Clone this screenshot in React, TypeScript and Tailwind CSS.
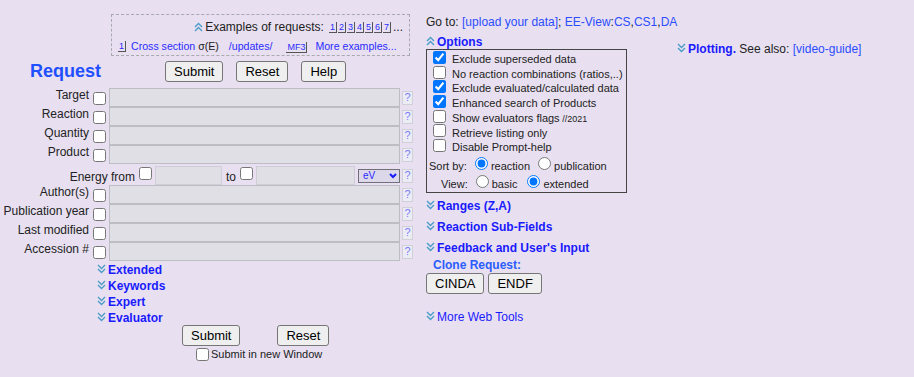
import React from "react";

const font = { fontFamily: '"Liberation Sans", Arial, sans-serif' };

const Chevrons = ({ up = false }: { up?: boolean }) => (
  <svg width="9" height="10" viewBox="0 0 9 10" className="shrink-0">
    <g
      fill="none"
      stroke="#4b9cc9"
      strokeWidth="1.4"
      transform={up ? "rotate(180 4.5 5)" : undefined}
    >
      <polyline points="1,1 4.5,4.5 8,1" />
      <polyline points="1,5 4.5,8.5 8,5" />
    </g>
  </svg>
);

const Help = () => (
  <span className="ml-[2px] flex h-[14px] w-[11px] shrink-0 items-center justify-center border border-[#d0d0d8] bg-[#ececf4] text-[11px] leading-none text-[#7a7aff]">
    ?
  </span>
);

const KeyLink = ({ children }: { children: React.ReactNode }) => (
  <span className="border-r border-b border-[#555] px-[1px] text-[9px] leading-[10px] text-[#2b2bff]">
    {children}
  </span>
);

const Btn = ({ children, className = "" }: { children: React.ReactNode; className?: string }) => (
  <button
    className={`h-[21px] rounded-[3px] border border-[#767676] bg-[#efefef] px-[8px] text-[13px] leading-none text-black ${className}`}
  >
    {children}
  </button>
);

const Box = ({ checked = false, className = "" }: { checked?: boolean; className?: string }) => (
  <input
    type="checkbox"
    defaultChecked={checked}
    className={`m-0 h-[13px] w-[13px] shrink-0 ${className}`}
  />
);

const Field = ({ label }: { label: string }) => (
  <div className="flex h-[19px] items-center">
    <span className="w-[89px] -translate-y-[3px] text-right text-[12px] whitespace-nowrap">{label}</span>
    <Box className="ml-[4px] translate-y-[1px]" />
    <span className="ml-[3px] h-[19px] w-[291px] border border-[#bdbdc4] bg-[#e0dfe6]" />
    <Help />
  </div>
);

const Section = ({ label, bold = true }: { label: string; bold?: boolean }) => (
  <div className="flex items-start gap-[2px]">
    <span className="mt-[1px]">
      <Chevrons />
    </span>
    <span className={`text-[12px] leading-[14px] text-[#1a1aff] ${bold ? "font-bold" : ""}`}>{label}</span>
  </div>
);

const Opt = ({ label, checked = false, small }: { label: string; checked?: boolean; small?: string }) => (
  <div className="flex h-[14.7px] items-center">
    <Box checked={checked} className="ml-[6px] -translate-y-[2px]" />
    <span className="ml-[6px] text-[11px]">
      {label}
      {small && <span className="text-[9px]"> {small}</span>}
    </span>
  </div>
);

export default function App() {
  return (
    <div style={font} className="flex h-[377px] w-[914px] bg-[#e8e0f0] text-[#222]">
      {/* left column */}
      <div className="flex w-[415px] flex-col pt-[14px]">
        <div className="ml-[111px] flex h-[42px] w-[299px] flex-col border border-dashed border-[#a8a8b0] px-[6px] whitespace-nowrap">
          <div className="mt-[3px] flex items-center justify-end gap-[2px] text-[12px]">
            <Chevrons up />
            <span>Examples of requests:</span>
            <span className="ml-[3px] flex gap-[1px]">
              {["1", "2", "3", "4", "5", "6", "7"].map((n) => (
                <KeyLink key={n}>{n}</KeyLink>
              ))}
            </span>
            <span>...</span>
          </div>
          <div className="mt-[3px] flex items-center text-[10.6px] text-[#2b2bff]">
            <KeyLink>1</KeyLink>
            <span className="ml-[5px]">
              Cross section <span className="text-[#222]">σ(E)</span>
            </span>
            <span className="ml-[10px]">/updates/</span>
            <span className="ml-[14px]">
              <KeyLink>MF3</KeyLink>
            </span>
            <span className="ml-[8px]">More examples...</span>
          </div>
        </div>

        <div className="mt-[4px] flex h-[22px] items-center">
          <span className="ml-[30px] w-[135px] text-[18px] font-bold text-[#1f4fff]">Request</span>
          <Btn>Submit</Btn>
          <Btn className="ml-[13px]">Reset</Btn>
          <Btn className="ml-[13px]">Help</Btn>
        </div>

        <div className="mt-[6px] flex flex-col">
          <Field label="Target" />
          <Field label="Reaction" />
          <Field label="Quantity" />
          <Field label="Product" />
          <div className="mt-[2px] flex h-[19px] items-center">
            <span className="w-[135px] translate-y-[1px] text-right text-[12px]">Energy from</span>
            <Box className="ml-[4px] -translate-y-[2px]" />
            <span className="ml-[3px] h-[19px] w-[67px] border border-[#cfcdd8] bg-[#e0dfe6]" />
            <span className="ml-[4px] translate-y-[1px] text-[12px]">to</span>
            <Box className="ml-[4px] -translate-y-[2px]" />
            <span className="ml-[3px] h-[19px] w-[99px] border border-[#cfcdd8] bg-[#e0dfe6]" />
            <span className="ml-[3px] flex h-[14px] w-[42px] items-center justify-between border border-[#707078] bg-[#dcd8ea] pr-[2px] pl-[4px] text-[10px] text-[#2b2bff]">
              eV
              <svg width="8" height="6" viewBox="0 0 8 6">
                <polyline points="1,1 4,4 7,1" fill="none" stroke="#1a1aff" strokeWidth="2" />
              </svg>
            </span>
            <Help />
          </div>
          <Field label="Author(s)" />
          <Field label="Publication year" />
          <Field label="Last modified" />
          <Field label="Accession #" />
        </div>

        <div className="mt-[2px] ml-[97px] flex flex-col gap-[2px]">
          <Section label="Extended" />
          <Section label="Keywords" />
          <Section label="Expert" />
          <Section label="Evaluator" />
        </div>

        <div className="flex items-center">
          <Btn className="ml-[182px]">Submit</Btn>
          <Btn className="ml-[37px]">Reset</Btn>
        </div>
        <div className="ml-[196px] flex items-center gap-[2px] text-[11px]">
          <Box />
          <span>Submit in new Window</span>
        </div>
      </div>

      {/* right column */}
      <div className="ml-[11px] flex flex-col pt-[13px]">
        <div className="text-[12px]">
          Go to: <span className="text-[#2b4dff]">[upload your data]</span>;{" "}
          <span className="text-[#2b4dff]">EE-View</span>:<span className="text-[#2b4dff]">CS</span>,
          <span className="text-[#2b4dff]">CS1</span>,<span className="text-[#2b4dff]">DA</span>
        </div>
        <div className="flex">
          <div className="flex w-[251px] flex-col">
            <div className="mt-[4px] flex items-start gap-[2px]">
              <span className="mt-[1px]">
                <Chevrons up />
              </span>
              <span className="text-[12px] leading-[14px] font-bold text-[#1a1aff]">Options</span>
            </div>
            <div className="flex h-[144px] w-[201px] flex-col border border-[#444] pt-[2px]">
              <Opt label="Exclude superseded data" checked />
              <Opt label="No reaction combinations (ratios,..)" />
              <Opt label="Exclude evaluated/calculated data" checked />
              <Opt label="Enhanced search of Products" checked />
              <Opt label="Show evaluators flags" small="//2021" />
              <Opt label="Retrieve listing only" />
              <Opt label="Disable Prompt-help" />
              <div className="mt-[3px] flex h-[16px] items-center text-[11px]">
                <span className="ml-[2px]">Sort by:</span>
                <input type="radio" name="s" defaultChecked className="m-0 ml-[8px] h-[13px] w-[13px] -translate-y-[2px]" />
                <span className="ml-[3px]">reaction</span>
                <input type="radio" name="s" className="m-0 ml-[8px] h-[13px] w-[13px] -translate-y-[2px]" />
                <span className="ml-[3px]">publication</span>
              </div>
              <div className="mt-[2px] flex h-[16px] items-center text-[11px]">
                <span className="ml-[14px]">View:</span>
                <input type="radio" name="v" className="m-0 ml-[8px] h-[13px] w-[13px] -translate-y-[2px]" />
                <span className="ml-[3px]">basic</span>
                <input type="radio" name="v" defaultChecked className="m-0 ml-[10px] h-[13px] w-[13px] -translate-y-[2px]" />
                <span className="ml-[3px]">extended</span>
              </div>
            </div>
            <div className="mt-[6px] flex flex-col gap-[7px]">
              <Section label="Ranges (Z,A)" />
              <Section label="Reaction Sub-Fields" />
              <Section label="Feedback and User's Input" />
            </div>
            <div className="mt-[3px] ml-[7px] text-[12px] leading-[14px] font-bold text-[#2b5cff]">Clone Request:</div>
            <div className="mt-[1px] flex gap-[4px]">
              <Btn className="px-[8px]">CINDA</Btn>
              <Btn className="px-[8px]">ENDF</Btn>
            </div>
            <div className="mt-[16px]">
              <Section label="More Web Tools" bold={false} />
            </div>
          </div>
          <div className="mt-[11px] flex items-start gap-[2px] text-[12px]">
            <span className="mt-[1px]">
              <Chevrons />
            </span>
            <span className="leading-[14px]">
              <span className="font-bold text-[#1a1aff]">Plotting.</span> See also:{" "}
              <span className="text-[#2b4dff]">[video-guide]</span>
            </span>
          </div>
        </div>
      </div>
    </div>
  );
}
